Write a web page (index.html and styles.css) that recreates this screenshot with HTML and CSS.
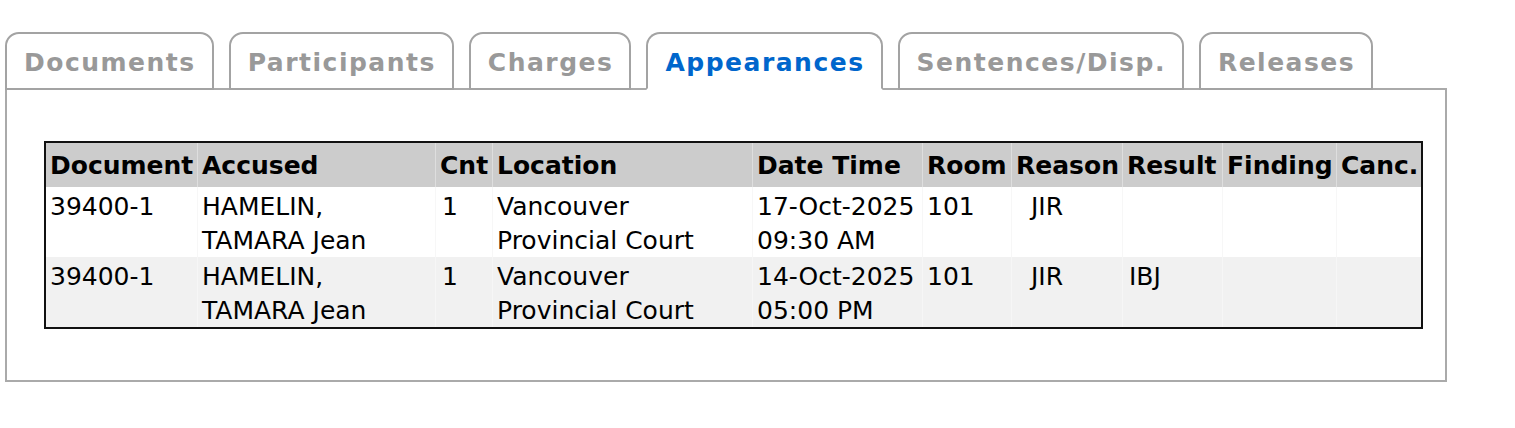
FILE: index.html
```html
<!DOCTYPE html>
<html lang="en">
<head>
<meta charset="utf-8">
<title>Appearances</title>
<link rel="stylesheet" href="styles.css">
</head>
<body>
<div class="page">
  <div class="tabs">
    <div class="tab">Documents</div>
    <div class="tab">Participants</div>
    <div class="tab">Charges</div>
    <div class="tab active">Appearances</div>
    <div class="tab">Sentences/Disp.</div>
    <div class="tab">Releases</div>
  </div>
  <div class="panel">
    <table class="grid">
      <colgroup>
        <col class="c-doc"><col class="c-acc"><col class="c-cnt"><col class="c-loc"><col class="c-dt">
        <col class="c-room"><col class="c-reason"><col class="c-result"><col class="c-find"><col class="c-canc">
      </colgroup>
      <thead>
        <tr>
          <th>Document</th><th>Accused</th><th>Cnt</th><th>Location</th><th>Date Time</th>
          <th>Room</th><th>Reason</th><th>Result</th><th>Finding</th><th>Canc.</th>
        </tr>
      </thead>
      <tbody>
        <tr>
          <td>39400-1</td><td>HAMELIN,<br>TAMARA Jean</td><td class="cnt">1</td><td>Vancouver<br>Provincial Court</td><td>17-Oct-2025<br>09:30 AM</td>
          <td>101</td><td class="reason">JIR</td><td class="result"></td><td></td><td></td>
        </tr>
        <tr class="alt">
          <td>39400-1</td><td>HAMELIN,<br>TAMARA Jean</td><td class="cnt">1</td><td>Vancouver<br>Provincial Court</td><td>14-Oct-2025<br>05:00 PM</td>
          <td>101</td><td class="reason">JIR</td><td class="result">IBJ</td><td></td><td></td>
        </tr>
      </tbody>
    </table>
  </div>
</div>
</body>
</html>
```

FILE: styles.css
```css
html, body {
  margin: 0;
  padding: 0;
  background: #ffffff;
}

body {
  font-family: "DejaVu Sans", Verdana, sans-serif;
  font-size: 25px;
  color: #000000;
}

.page {
  padding: 32px 0 0 5px;
  width: 1442px;
}

.tabs {
  display: flex;
  gap: 15px;
  margin-bottom: -2px;
  position: relative;
  z-index: 1;
}

.tab {
  height: 54px;
  box-sizing: content-box;
  padding: 0 16px 0 17px;
  border: 2px solid #a3a3a3;
  border-radius: 14px 14px 0 0;
  background: #ffffff;
  color: #999999;
  font-weight: bold;
  letter-spacing: 1.5px;
  line-height: 58px;
  white-space: nowrap;
}

.tab.active {
  color: #0066cc;
  border-bottom-color: #ffffff;
}

.panel {
  border: 2px solid #aaaaaa;
  padding: 51px 22px 51px 37px;
}

.grid {
  width: 1379px;
  table-layout: fixed;
  border: 2px solid #111111;
  border-collapse: separate;
  border-spacing: 0;
}

.c-doc { width: 151px; }
.c-acc { width: 238px; }
.c-cnt { width: 57px; }
.c-loc { width: 260px; }
.c-dt { width: 170px; }
.c-room { width: 89px; }
.c-reason { width: 111px; }
.c-result { width: 100px; }
.c-find { width: 114px; }
.c-canc { width: 85px; }

.grid th {
  background: #cccccc;
  text-align: left;
  font-weight: bold;
  line-height: 34px;
  padding: 6px 0 4px 4px;
  border-left: 1px solid #dedede;
  white-space: nowrap;
}

.grid th:first-child,
.grid td:first-child {
  border-left: none;
}

.grid td {
  vertical-align: top;
  line-height: 33.5px;
  padding: 3px 0 0 4px;
  border-left: 1px solid #f7f7f7;
  white-space: nowrap;
}

.grid td.cnt {
  padding-left: 6px;
}

.grid td.reason {
  padding-left: 19px;
}

.grid td.result {
  padding-left: 6px;
}

.grid tr.alt td {
  background: #f1f1f1;
  border-left-color: #f6f6f6;
}
```
